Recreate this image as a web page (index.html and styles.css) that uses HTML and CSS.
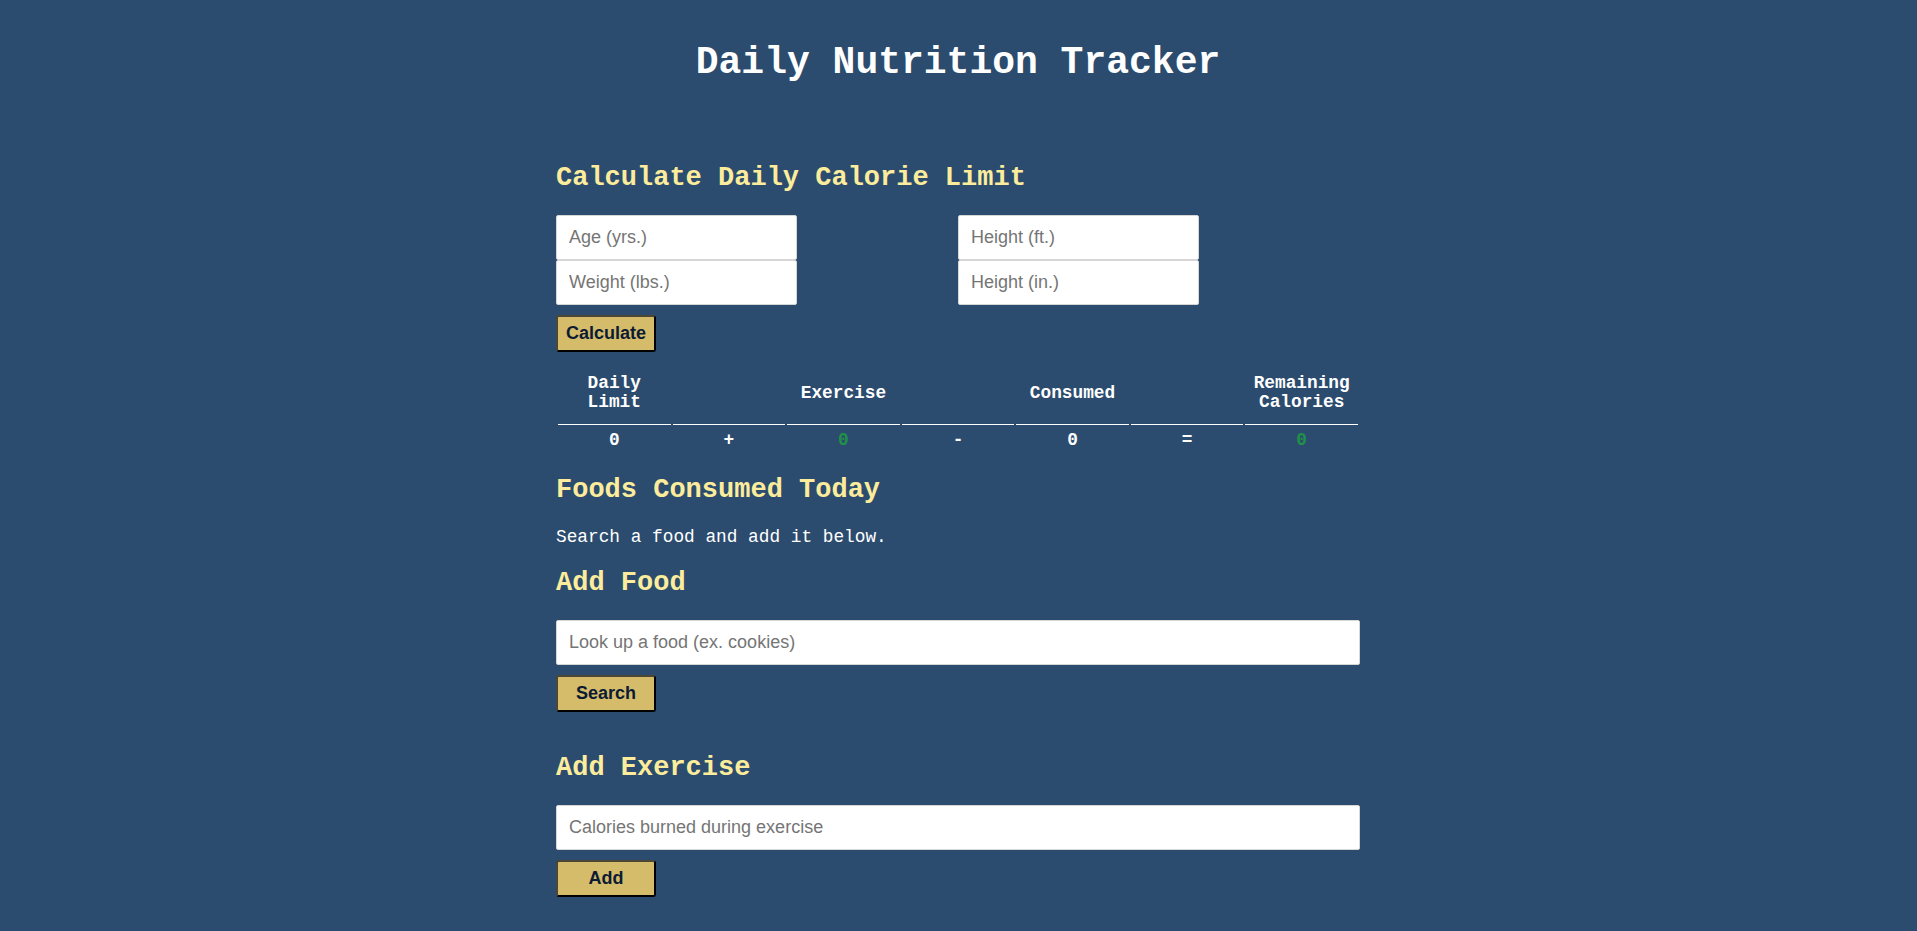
FILE: index.html
```html
<!DOCTYPE html>
<html lang="en">
<head>
<meta charset="utf-8">
<title>Daily Nutrition Tracker</title>
<link rel="stylesheet" href="styles.css">
</head>
<body>
<h1 class="title">Daily Nutrition Tracker</h1>
<main class="container">
  <section class="calc">
    <h2 class="heading heading-first">Calculate Daily Calorie Limit</h2>
    <div class="calc-grid">
      <div class="calc-col">
        <input class="field" type="text" placeholder="Age (yrs.)">
        <input class="field" type="text" placeholder="Weight (lbs.)">
      </div>
      <div class="calc-col">
        <input class="field" type="text" placeholder="Height (ft.)">
        <input class="field" type="text" placeholder="Height (in.)">
      </div>
    </div>
    <button class="btn" type="button">Calculate</button>
    <table class="summary">
      <thead>
        <tr>
          <th>Daily Limit</th>
          <th></th>
          <th>Exercise</th>
          <th></th>
          <th>Consumed</th>
          <th></th>
          <th>Remaining Calories</th>
        </tr>
      </thead>
      <tbody>
        <tr>
          <td>0</td>
          <td>+</td>
          <td class="green">0</td>
          <td>-</td>
          <td>0</td>
          <td>=</td>
          <td class="green">0</td>
        </tr>
      </tbody>
    </table>
  </section>

  <section class="foods">
    <h2 class="heading heading-foods">Foods Consumed Today</h2>
    <p class="note">Search a food and add it below.</p>
    <h2 class="heading heading-tight">Add Food</h2>
    <input class="field field-wide" type="text" placeholder="Look up a food (ex. cookies)">
    <button class="btn" type="button">Search</button>
  </section>

  <section class="exercise">
    <h2 class="heading heading-far">Add Exercise</h2>
    <input class="field field-wide" type="text" placeholder="Calories burned during exercise">
    <button class="btn" type="button">Add</button>
  </section>
</main>
</body>
</html>
```

FILE: styles.css
```css
html, body {
  margin: 0;
  padding: 0;
}

body {
  background: #2b4c6e;
  color: #ffffff;
  font-family: "Liberation Mono", "Courier New", monospace;
  font-size: 17.8px;
  padding-top: 41px;
  padding-right: 1px;
  padding-bottom: 40px;
}

.title {
  margin: 0;
  text-align: center;
  font-size: 38px;
  line-height: 43px;
  font-weight: bold;
  color: #ffffff;
}

.container {
  width: 804px;
  margin: 0 auto;
}

.heading {
  margin: 22px 0 0;
  font-size: 27px;
  line-height: 31px;
  font-weight: bold;
  color: #fcec9c;
}

.heading-first {
  margin-top: 79px;
}

.heading-foods {
  margin-top: 23px;
}

.heading-tight {
  margin-top: 21px;
}

.heading-far {
  margin-top: 41px;
}

.calc-grid {
  display: grid;
  grid-template-columns: 1fr 1fr;
  margin-top: 21px;
}

.calc-col {
  display: flex;
  flex-direction: column;
}

.field {
  display: block;
  box-sizing: border-box;
  width: 60%;
  height: 45px;
  margin: 0;
  padding: 0 12px;
  border: 1px solid #d6d6d6;
  border-radius: 2px;
  background: #ffffff;
  font-family: "Liberation Sans", Arial, sans-serif;
  font-size: 18px;
  color: #333;
  outline: none;
}

.field::placeholder {
  color: #757575;
}

.field-wide {
  width: 100%;
  margin-top: 21px;
}

.btn {
  display: block;
  box-sizing: border-box;
  width: 100px;
  height: 37px;
  margin-top: 10px;
  padding: 0;
  background: #d5bc6a;
  color: #0c1b33;
  font-family: "Liberation Sans", Arial, sans-serif;
  font-size: 18px;
  font-weight: bold;
  border-style: solid;
  border-width: 2px;
  border-color: #4b4636 #000000 #000000 #4b4636;
  border-radius: 3px;
  cursor: pointer;
}

.summary {
  width: 100%;
  table-layout: fixed;
  border-collapse: separate;
  border-spacing: 2px;
  margin-top: 9px;
  font-weight: bold;
  color: #ffffff;
}

.summary th {
  padding: 11px 2px;
  line-height: 19.3px;
  font-size: 17.8px;
  text-align: center;
  vertical-align: middle;
  border-bottom: 1px solid #ffffff;
}

.summary td {
  padding: 4px 2px 0;
  line-height: 19.3px;
  text-align: center;
}

.summary .green {
  color: #1f9148;
}

.note {
  margin: 21px 0 0;
  line-height: 20px;
  color: #ffffff;
}
```
